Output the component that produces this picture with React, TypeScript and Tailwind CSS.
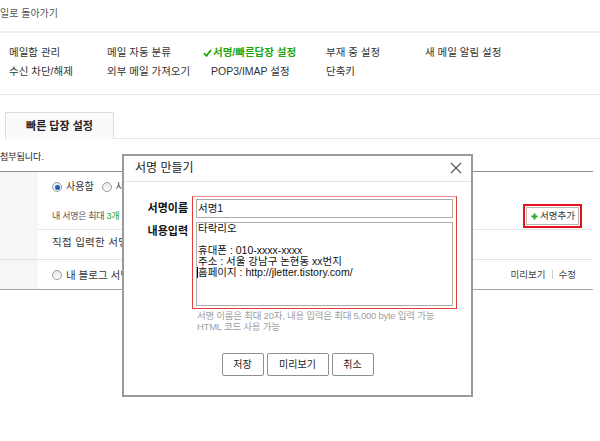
import React from "react";

const FONT = "font-['Liberation_Sans','Noto_Sans_CJK_KR',sans-serif]";

function Radio({ checked = false }: { checked?: boolean }) {
  return (
    <span className="inline-flex h-[10px] w-[10px] shrink-0 items-center justify-center rounded-full border border-[#9d9d9d] bg-gradient-to-b from-[#e6e6e6] to-[#fdfdfd]">
      {checked && <span className="h-[5px] w-[5px] rounded-full bg-[#1f5fc0]" />}
    </span>
  );
}

const menuRows = [
  ["메일함 관리", "메일 자동 분류", "__active__", "부재 중 설정", "새 메일 알림 설정"],
  ["수신 차단/해제", "외부 메일 가져오기", "POP3/IMAP 설정", "단축키", ""],
];

function MenuItem({ label }: { label: string }) {
  if (label === "__active__") {
    return (
      <div className="flex items-center gap-[1px] font-bold text-[#1ea60f]">
        <svg width="9" height="8" viewBox="0 0 9 8">
          <path d="M1 4.2L3.5 6.8L8 1" stroke="#1ea60f" strokeWidth="1.8" fill="none" />
        </svg>
        서명/빠른답장 설정
      </div>
    );
  }
  if (label.startsWith("POP3")) return <div className="pl-[8px]">{label}</div>;
  return <div>{label}</div>;
}

export default function App() {
  return (
    <div className={`relative h-[441px] w-[600px] overflow-hidden bg-white text-[#333] ${FONT}`}>
      {/* back link */}
      <div className="flex h-[33px] items-center border-b-2 border-[#eeeeee] pb-[4px]">
        <span className="whitespace-nowrap text-[10px] leading-[12px] text-[#555]">일로 돌아가기</span>
      </div>

      {/* settings menu */}
      <div className="grid h-[62px] grid-cols-[98px_96px_123px_99px_auto] auto-rows-[19px] border-b border-[#e6e6e6] pl-[9px] pt-[10px] text-[10.5px] leading-[19px] text-[#333]">
        {menuRows.flat().map((label, i) => (
          <MenuItem key={i} label={label} />
        ))}
      </div>

      {/* tab */}
      <div className="flex pl-[5px] pt-[17px]">
        <div className="flex h-[27px] w-[109px] items-center justify-center border border-b-0 border-[#dcdcdc] bg-[#fafafa] text-[11px] font-bold text-[#222]">
          빠른 답장 설정
        </div>
        <div className="flex-1 border-b border-[#e6e6e6]" />
      </div>

      <div className="flex h-[32px] items-center pt-[3px]">
        <span className="whitespace-nowrap text-[9px] leading-[12px] text-[#222]">첨부됩니다.</span>
      </div>

      {/* signature table */}
      <div className="w-[593px] border-b border-t border-b-[#a5a5a5] border-t-[#8e8e8e]">
        <div className="flex border-b border-[#e3e3e3]">
          <div className="w-[38px] bg-[#f6f6f6]" />
          <div className="flex-1">
            <div className="border-b border-[#e6e6e6] pb-[1px] pl-[14px] pr-[11px] pt-[9px]">
              <div className="flex h-[12px] items-center gap-[8px] text-[10px] leading-[12px]">
                <label className="flex items-center gap-[4px]">
                  <Radio checked />
                  사용함
                </label>
                <label className="flex items-center gap-[4px]">
                  <Radio />
                  사용
                </label>
              </div>
              <div className="mt-[11px] flex h-[24px] items-center justify-between">
                <span className="text-[9px] leading-[12px] tracking-[-0.3px] text-[#555]">
                  내 서명은 최대 <span className="text-[#22a80f]">3개</span>
                </span>
                <div className="border-2 border-[#e5121b] p-px">
                  <button className="flex h-[18px] items-center gap-[2px] border border-[#b5b5b5] bg-white pl-[4px] pr-[3px] text-[9.5px] leading-[12px] text-[#333]">
                    <svg width="7" height="7" viewBox="0 0 7 7">
                      <path d="M3.5 0.5V6.5M0.5 3.5H6.5" stroke="#2aa52a" strokeWidth="2" />
                    </svg>
                    서명추가
                  </button>
                </div>
              </div>
            </div>
            <div className="h-[29px] pl-[14px] pt-[6px] text-[10.5px] leading-[12px] tracking-[0.3px]">
              직접 입력한 서명
            </div>
          </div>
        </div>
        <div className="flex h-[29px]">
          <div className="w-[38px] bg-[#f6f6f6]" />
          <div className="flex flex-1 items-center justify-between pl-[14px] pr-[17px]">
            <label className="flex items-center gap-[4px] text-[10.5px] leading-[12px]">
              <Radio />
              내 블로그 서명
            </label>
            <div className="flex items-center text-[9.5px] leading-[12px] text-[#444]">
              미리보기
              <span className="mx-[6px] h-[9px] w-px bg-[#cccccc]" />
              수정
            </div>
          </div>
        </div>
      </div>

      {/* dialog */}
      <div className="absolute left-[122px] top-[154px] h-[243px] w-[351px] border-2 border-[#9a9a9a] bg-white">
        <div className="flex h-[26px] items-center justify-between border-b border-[#e3e3e3] pb-[1px] pl-[11px] pr-[9px]">
          <span className="text-[12px] leading-[14px] text-[#222]">서명 만들기</span>
          <svg width="12" height="12" viewBox="0 0 12 12">
            <path d="M1 1L11 11M11 1L1 11" stroke="#555" strokeWidth="1.1" />
          </svg>
        </div>
        <div className="pt-[14px]">
          <div className="flex">
            <div className="w-[68px] pr-[4px] text-right text-[11px] font-bold leading-[12px] text-[#111]">
              <div className="mt-[6px]">서명이름</div>
              <div className="mt-[11px]">내용입력</div>
            </div>
            <div className="w-[265px]">
              <div className="border border-[#e83b3b] border-t-[#f18d8d] px-[3px] pb-[2px] pt-[2px]">
                <div className="flex h-[19px] items-center border border-[#ababab] pl-[1px] text-[10.5px] text-[#111]">
                  서명1
                </div>
                <div className="mt-[4px] h-[84px] border border-[#ababab] pl-[1px] text-[10.5px] leading-[11px] text-[#111]">
                  <div>타락리오</div>
                  <div>&nbsp;</div>
                  <div>휴대폰 : 010-xxxx-xxxx</div>
                  <div>주소 : 서울 강남구 논현동 xx번지</div>
                  <div>
                    <span className="-ml-px inline-block h-[11px] w-px bg-black align-[-2px]" />
                    홈페이지 : http://jletter.tistory.com/
                  </div>
                </div>
              </div>
              <div className="mt-[1px] pl-[5px] text-[9.5px] leading-[11px] tracking-[-0.25px] text-[#a0a0a0]">
                서명 이름은 최대 20자, 내용 입력은 최대 5,000 byte 입력 가능
                <br />
                HTML 코드 사용 가능
              </div>
            </div>
          </div>
          <div className="mt-[21px] flex justify-center gap-[3px]">
            <button className="h-[23px] w-[42px] rounded-[2px] border border-[#8f8f8f] bg-white text-[10px] text-[#222]">
              저장
            </button>
            <button className="h-[23px] w-[62px] rounded-[2px] border border-[#8f8f8f] bg-white text-[10px] text-[#222]">
              미리보기
            </button>
            <button className="h-[23px] w-[42px] rounded-[2px] border border-[#8f8f8f] bg-white text-[10px] text-[#222]">
              취소
            </button>
          </div>
        </div>
      </div>
    </div>
  );
}
